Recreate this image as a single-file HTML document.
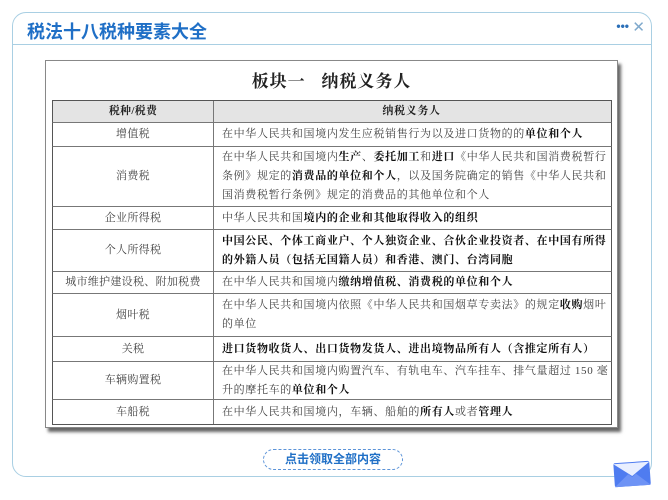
<!DOCTYPE html>
<html><head><meta charset="utf-8"><style>
*{margin:0;padding:0;box-sizing:border-box}
body{width:668px;height:500px;background:#fff;position:relative;overflow:hidden;font-family:"Liberation Serif","Noto Serif CJK SC",serif}
.card{position:absolute;left:12px;top:12px;width:640px;height:465px;border:1.5px solid #a9cfe3;border-radius:14px;background:#fff}
.hdr{position:absolute;left:0;top:0;width:100%;height:32px;border-bottom:1.5px solid #a9cfe3}
.title{position:absolute;left:14px;top:5px;font:bold 18px "Liberation Sans","Noto Sans CJK SC",sans-serif;color:#1f6fc6}
.dots{position:absolute;right:22px;top:6px;font:bold 12px "Liberation Sans",sans-serif;color:#2a6fb8;letter-spacing:0px}
.x{position:absolute;right:6px;top:5px;font:15px "Liberation Sans",sans-serif;color:#7fa9cc}
.paper{position:absolute;left:45px;top:60px;width:573px;height:368px;background:#fff;border:1px solid #888;box-shadow:3px 4px 3px #666}
.ptitle{position:absolute;left:0;width:100%;top:6px;text-align:center;font-size:17px;font-weight:bold;color:#222;letter-spacing:1px}
.row{position:absolute;left:52px;width:560px;border-left:1.5px solid #555;border-right:1.5px solid #555;border-bottom:1px solid #777;font-size:11px;color:#444;letter-spacing:.65px;line-height:19px}
.c1{position:absolute;left:0;top:0;bottom:0;width:161px;border-right:1px solid #777;display:flex;align-items:center;justify-content:center;letter-spacing:.3px}
.c2{position:absolute;left:169px;right:2px;top:0;bottom:0;display:flex;align-items:center}
b{color:#111}
.btn{position:absolute;left:263px;top:449px;width:140px;height:21px;border:1.5px dashed #5b93d8;border-radius:11px;text-align:center;font:bold 12px/18px "Liberation Sans","Noto Sans CJK SC",sans-serif;color:#1f6fc6}
</style></head><body>
<div class="card"><div class="hdr"><div class="title">税法十八税种要素大全</div><div class="dots">•••</div><div class="x">✕</div></div></div>
<div class="paper"><div class="ptitle">板块一&nbsp;&nbsp;&nbsp;纳税义务人</div></div>
<div class="row" style="top:100px;height:23px;background:#e4e4e4;border-top:1.5px solid #555;font-weight:bold;color:#222"><div class="c1">税种/税费</div><div class="c2" style="justify-content:center;left:161px">纳税义务人</div></div>
<div class="row" style="top:123px;height:24px"><div class="c1">增值税</div><div class="c2"><span>在中华人民共和国境内发生应税销售行为以及进口货物的的<b>单位和个人</b></span></div></div>
<div class="row" style="top:147px;height:60px"><div class="c1">消费税</div><div class="c2"><span>在中华人民共和国境内<b>生产</b>、<b>委托加工</b>和<b>进口</b>《中华人民共和国消费税暂行<br>条例》规定的<b>消费品的单位和个人</b>，以及国务院确定的销售《中华人民共和<br>国消费税暂行条例》规定的消费品的其他单位和个人</span></div></div>
<div class="row" style="top:207px;height:23px"><div class="c1">企业所得税</div><div class="c2"><span>中华人民共和国<b>境内的企业和其他取得收入的组织</b></span></div></div>
<div class="row" style="top:230px;height:42px"><div class="c1">个人所得税</div><div class="c2"><b>中国公民、个体工商业户、个人独资企业、合伙企业投资者、在中国有所得<br>的外籍人员（包括无国籍人员）和香港、澳门、台湾同胞</b></div></div>
<div class="row" style="top:272px;height:22px"><div class="c1">城市维护建设税、附加税费</div><div class="c2"><span>在中华人民共和国境内<b>缴纳增值税、消费税的单位和个人</b></span></div></div>
<div class="row" style="top:294px;height:43px"><div class="c1">烟叶税</div><div class="c2"><span>在中华人民共和国境内依照《中华人民共和国烟草专卖法》的规定<b>收购</b>烟叶<br>的单位</span></div></div>
<div class="row" style="top:337px;height:25px"><div class="c1">关税</div><div class="c2"><b>进口货物收货人、出口货物发货人、进出境物品所有人（含推定所有人）</b></div></div>
<div class="row" style="top:362px;height:38px"><div class="c1">车辆购置税</div><div class="c2"><span>在中华人民共和国境内购置汽车、有轨电车、汽车挂车、排气量超过 150 毫<br>升的摩托车的<b>单位和个人</b></span></div></div>
<div class="row" style="top:400px;height:25px;border-bottom:1.5px solid #555"><div class="c1">车船税</div><div class="c2"><span>在中华人民共和国境内，车辆、船舶的<b>所有人</b>或者<b>管理人</b></span></div></div>
<div class="btn">点击领取全部内容</div>
<svg style="position:absolute;left:612px;top:458px" width="40" height="30" viewBox="0 0 40 30"><g transform="rotate(-4 20 15)"><rect x="2" y="4" width="36" height="24" rx="2" fill="#4f7cf0"/><path d="M2 5 L20 18 L38 5 Z" fill="#e9efff"/><path d="M2 28 L16 16 L20 19 L24 16 L38 28 Z" fill="#6e93f5"/></g></svg>
</body></html>
